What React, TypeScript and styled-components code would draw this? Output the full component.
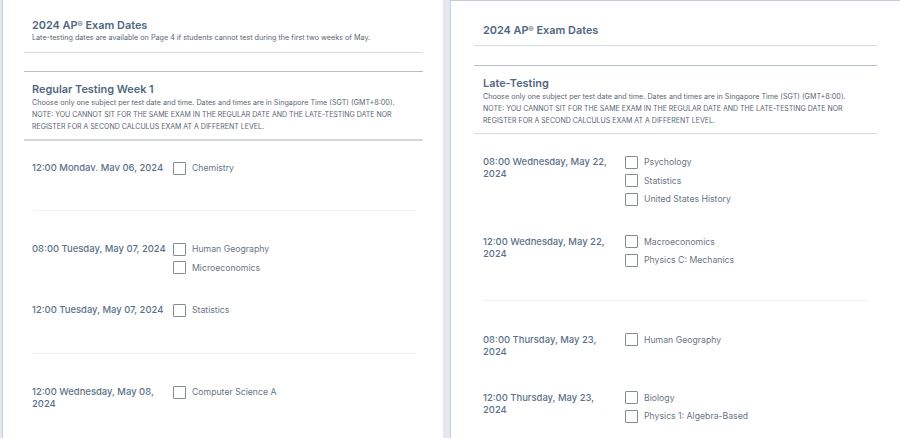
import React from 'react';
import styled, { createGlobalStyle } from 'styled-components';

const GlobalStyle = createGlobalStyle`
  html, body {
    margin: 0;
    padding: 0;
    background: #e6e6f1;
    font-family: Inter, "Noto Sans", sans-serif;
    overflow: hidden;
  }
`;

const Page = styled.div`
  display: flex;
  gap: 7px;
  height: 438px;
  padding-left: 2px;
  overflow: hidden;
  background: #e6e6f1;
`;

const Sheet = styled.div<{ $width?: number; $top?: boolean; $pad?: number }>`
  background: #fff;
  flex: ${(p) => (p.$width ? `0 0 ${p.$width}px` : '1')};
  border-left: 1px solid #c9d3dd;
  border-top: ${(p) => (p.$top ? '1px solid #c3ccd6' : 'none')};
  padding-left: ${(p) => p.$pad ?? 0}px;
  overflow: hidden;
  box-sizing: border-box;
`;

const Header = styled.div<{ $pt: number; $pb: number }>`
  padding: ${(p) => p.$pt}px 30px ${(p) => p.$pb}px 29px;
`;

const Title = styled.h1`
  margin: 0;
  font-size: 10.9px;
  line-height: 16px;
  font-weight: 600;
  color: #506781;
`;

const Mark = styled.span`
  font-size: 0.72em;
  vertical-align: 0.3em;
  line-height: 0;
`;

const Line = styled.div<{ $size: number; $h: number }>`
  font-size: ${(p) => p.$size}px;
  line-height: ${(p) => p.$h}px;
  height: ${(p) => p.$h}px;
  white-space: nowrap;
  color: #5a6472;
`;

const Rule = styled.div<{ $tone: 'light' | 'mid' | 'thick' | 'faint'; $inset: number; $right: number }>`
  margin: 0 ${(p) => p.$right}px 0 ${(p) => p.$inset}px;
  height: ${(p) => (p.$tone === 'thick' ? 2 : 1)}px;
  background: ${(p) =>
    p.$tone === 'light' ? '#d6dbe1' : p.$tone === 'mid' ? '#b4bfca' : p.$tone === 'thick' ? '#d3d7dc' : '#eff1f3'};
`;

const Spacer = styled.div<{ $h: number }>`
  height: ${(p) => p.$h}px;
`;

const Section = styled.div`
  padding: 9px 30px 6px 29px;
`;

const Group = styled.div<{ $pt: number; $pb: number }>`
  display: flex;
  flex-direction: column;
  gap: 24px;
  padding: ${(p) => p.$pt}px 30px ${(p) => p.$pb}px 29px;
`;

const Row = styled.div<{ $col: number }>`
  display: grid;
  grid-template-columns: ${(p) => p.$col}px auto;
  align-items: start;
  column-gap: 6px;
  min-height: 34px;
`;

const DateText = styled.div`
  margin-top: 3px;
  font-size: 9.45px;
  line-height: 12px;
  font-weight: 500;
  color: #5c718a;
`;

const Options = styled.div`
  display: flex;
  flex-direction: column;
`;

const Option = styled.label`
  display: flex;
  align-items: center;
  gap: 6px;
  height: 18.5px;
  font-size: 8.7px;
  color: #6a7582;
`;

const Box = styled.span`
  width: 11px;
  height: 11px;
  border: 1px solid #858b93;
  border-radius: 1px;
  background: #fff;
`;

type Slot = { date: string; subjects: string[] };
type Day = { slots: Slot[]; pt: number; pb: number; rule?: boolean };

const regular: Day[] = [
  { pt: 18, pb: 17, rule: true, slots: [{ date: '12:00 Mondav. Mav 06, 2024', subjects: ['Chemistry'] }] },
  {
    pt: 29,
    pb: 18,
    rule: true,
    slots: [
      { date: '08:00 Tuesday, May 07, 2024', subjects: ['Human Geography', 'Microeconomics'] },
      { date: '12:00 Tuesday, May 07, 2024', subjects: ['Statistics'] },
    ],
  },
  { pt: 29, pb: 18, slots: [{ date: '12:00 Wednesday, May 08, 2024', subjects: ['Computer Science A'] }] },
];

const late: Day[] = [
  {
    pt: 19,
    pb: 30,
    rule: true,
    slots: [
      { date: '08:00 Wednesday, May 22, 2024', subjects: ['Psychology', 'Statistics', 'United States History'] },
      { date: '12:00 Wednesday, May 22, 2024', subjects: ['Macroeconomics', 'Physics C: Mechanics'] },
    ],
  },
  {
    pt: 30,
    pb: 18,
    slots: [
      { date: '08:00 Thursday, May 23, 2024', subjects: ['Human Geography'] },
      { date: '12:00 Thursday, May 23, 2024', subjects: ['Biology', 'Physics 1: Algebra-Based'] },
    ],
  },
];

function Instructions() {
  return (
    <>
      <Line $size={7.2} $h={12}>
        Choose only one subject per test date and time. Dates and times are in Singapore Time (SGT) (GMT+8:00).
      </Line>
      <Line $size={7} $h={12}>
        NOTE: YOU CANNOT SIT FOR THE SAME EXAM IN THE REGULAR DATE AND THE LATE-TESTING DATE NOR
      </Line>
      <Line $size={7} $h={12}>
        REGISTER FOR A SECOND CALCULUS EXAM AT A DIFFERENT LEVEL.
      </Line>
    </>
  );
}

function Schedule({ days, col, ruleInset, ruleRight }: { days: Day[]; col: number; ruleInset: number; ruleRight: number }) {
  return (
    <>
      {days.map((day, i) => (
        <React.Fragment key={i}>
          <Group $pt={day.pt} $pb={day.pb}>
            {day.slots.map((slot) => (
              <Row key={slot.date} $col={col}>
                <DateText>{slot.date}</DateText>
                <Options>
                  {slot.subjects.map((s) => (
                    <Option key={s}>
                      <Box />
                      {s}
                    </Option>
                  ))}
                </Options>
              </Row>
            ))}
          </Group>
          {day.rule && <Rule $tone="faint" $inset={ruleInset} $right={ruleRight} />}
        </React.Fragment>
      ))}
    </>
  );
}

export default function App() {
  return (
    <>
      <GlobalStyle />
      <Page>
        <Sheet $width={441}>
          <Header $pt={17} $pb={9}>
            <Title>
              2024 AP<Mark>®</Mark> Exam Dates
            </Title>
            <Line $size={7.2} $h={10}>
              Late-testing dates are available on Page 4 if students cannot test during the first two weeks of May.
            </Line>
          </Header>
          <Rule $tone="light" $inset={21} $right={20} />
          <Spacer $h={18} />
          <Rule $tone="mid" $inset={21} $right={20} />
          <Section>
            <Title>Regular Testing Week 1</Title>
            <Instructions />
          </Section>
          <Rule $tone="thick" $inset={21} $right={20} />
          <Schedule days={regular} col={135} ruleInset={30} ruleRight={27} />
        </Sheet>
        <Sheet $top $pad={3}>
          <Header $pt={21} $pb={7}>
            <Title>
              2024 AP<Mark>®</Mark> Exam Dates
            </Title>
          </Header>
          <Rule $tone="light" $inset={20} $right={23} />
          <Spacer $h={19} />
          <Rule $tone="mid" $inset={20} $right={23} />
          <Section>
            <Title>Late-Testing</Title>
            <Instructions />
          </Section>
          <Rule $tone="light" $inset={20} $right={23} />
          <Schedule days={late} col={136} ruleInset={28} ruleRight={31} />
        </Sheet>
      </Page>
    </>
  );
}
